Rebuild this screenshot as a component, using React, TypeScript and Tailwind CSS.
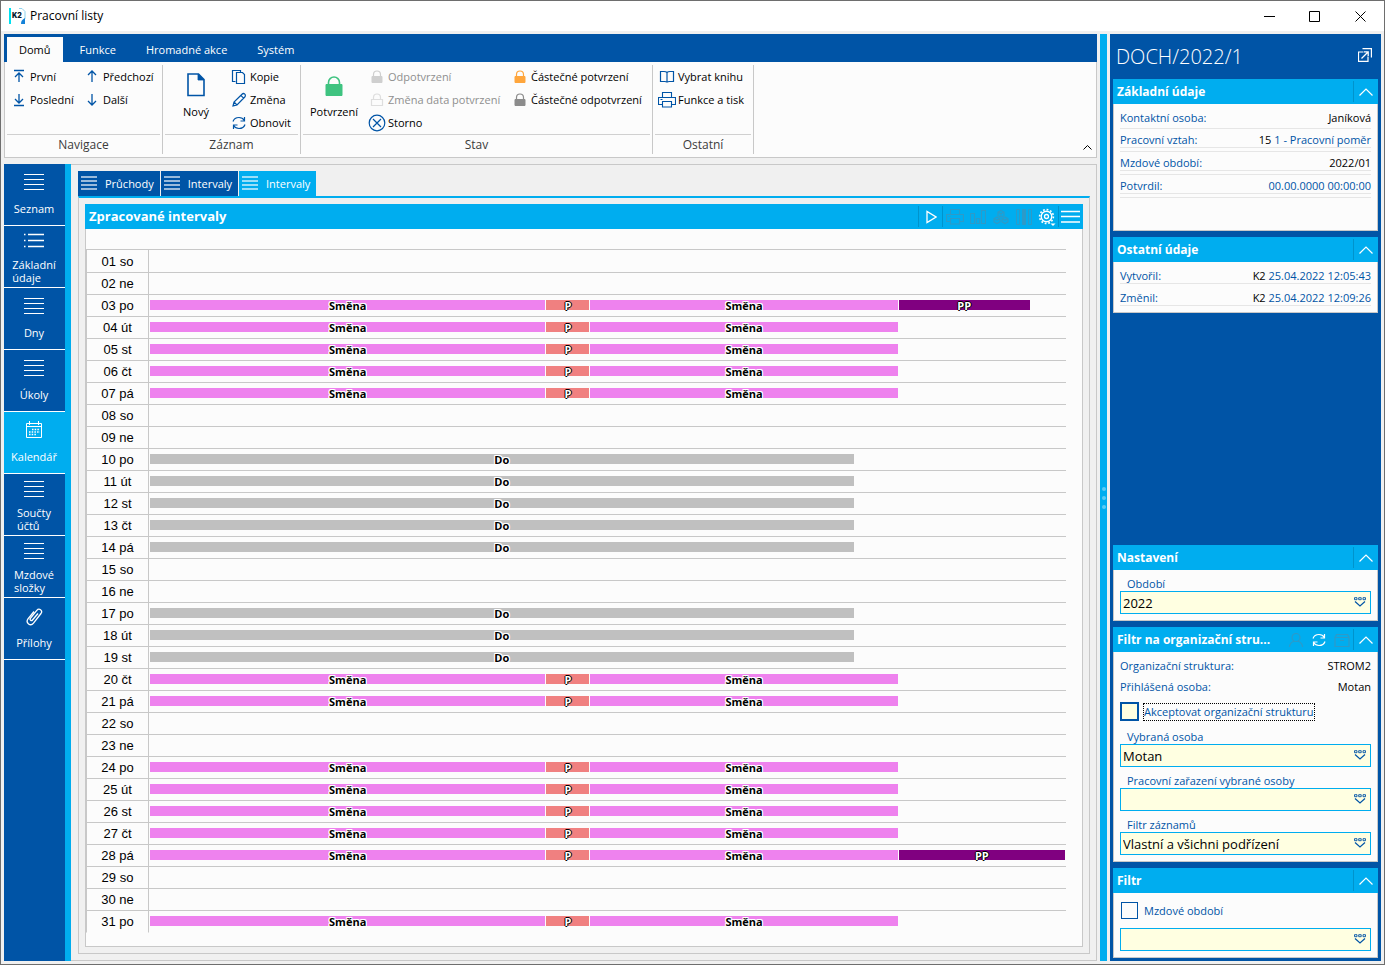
import React, { useState } from 'react';
import clsx from 'clsx';

type IconProps = { className?: string };
type Segment = { label: string; minutes: number; kind: 'shift' | 'break' | 'vacation' | 'overtime' };

// Visible part of the day in the timeline
const DAY_MINUTES = 624;

const WEEKDAYS = ['so', 'ne', 'po', 'út', 'st', 'čt', 'pá'];
const SHIFT_DAYS = [3, 4, 5, 6, 7, 20, 21, 24, 25, 26, 27, 28, 31];
const VACATION_DAYS = [10, 11, 12, 13, 14, 17, 18, 19];
const OVERTIME: Record<number, number> = { 3: 90, 28: 114 };

const getSegments = (day: number): Segment[] => {
  if (VACATION_DAYS.includes(day)) {
    return [{ label: 'Do', minutes: 480, kind: 'vacation' }];
  }
  if (!SHIFT_DAYS.includes(day)) return [];
  const segments: Segment[] = [
    { label: 'Směna', minutes: 270, kind: 'shift' },
    { label: 'P', minutes: 30, kind: 'break' },
    { label: 'Směna', minutes: 210, kind: 'shift' },
  ];
  if (OVERTIME[day]) {
    segments.push({ label: 'PP', minutes: OVERTIME[day], kind: 'overtime' });
  }
  return segments;
};

const days = Array.from({ length: 31 }, (_, i) => ({
  name: `${String(i + 1).padStart(2, '0')} ${WEEKDAYS[i % 7]}`,
  segments: getSegments(i + 1),
}));

const barColors = {
  shift: 'bg-[#ee82ee]',
  break: 'bg-[#f08080]',
  vacation: 'bg-[#c0c0c0]',
  overtime: 'bg-[#800080]',
};

const LIGHT_HALO = 'text-black [text-shadow:1px_0_#fff,-1px_0_#fff,0_1px_#fff,0_-1px_#fff,1px_1px_#fff,-1px_-1px_#fff,1px_-1px_#fff,-1px_1px_#fff]';
const DARK_HALO = 'text-white [text-shadow:1px_0_#000,-1px_0_#000,0_1px_#000,0_-1px_#000]';

/* ---------- icons ---------- */

const Svg = ({ w = 16, h = 16, className, children }: IconProps & { w?: number; h?: number; children: React.ReactNode }) => (
  <svg
    width={w}
    height={h}
    viewBox={`0 0 ${w} ${h}`}
    fill="none"
    stroke="currentColor"
    className={clsx('shrink-0', className)}
    aria-hidden="true"
  >
    {children}
  </svg>
);

const FirstIcon = () => <Svg><path d="M3 1.500h10M8 13V4M4 8l4-4 4 4" strokeWidth="1.3" /></Svg>;
const LastIcon = () => <Svg><path d="M3 13.5h10M8 2v9M4 7l4 4 4-4" strokeWidth="1.3" /></Svg>;
const UpIcon = () => <Svg><path d="M8 13V2M4 6l4-4 4 4" strokeWidth="1.3" /></Svg>;
const DownIcon = () => <Svg><path d="M8 2v11M4 9l4 4 4-4" strokeWidth="1.3" /></Svg>;
const NewIcon = () => (
  <Svg w={18} h={24}>
    <path d="M1 1h10.5L17 6.500V22.500H1z" strokeWidth="1.6" />
    <path d="M11 1v6h6z" fill="currentColor" strokeWidth="0.8" />
  </Svg>
);
const CopyIcon = () => (
  <Svg>
    <path d="M4.500 12.500h-3v-11h8v2" strokeWidth="1.200" />
    <path d="M5.500 3.500h6l2 2v9h-8z" strokeWidth="1.200" />
  </Svg>
);
const EditIcon = () => (
  <Svg>
    <path d="M2 14l1-4L11 2.200a1.800 1.800 0 0 1 2.800 2.800L6 13z M3 10l3 3M9.800 3.400l2.800 2.800M2 14l2-.6" strokeWidth="1.2" />
  </Svg>
);
const RefreshIcon = () => (
  <Svg>
    <path d="M2 6.500C3 3.500 5.200 2.500 8 2.500c2.500 0 4.300 1.200 5.400 3M13.500 2v4h-4M14 9.500c-1 3-3.200 4-6 4-2.500 0-4.300-1.200-5.400-3M2.500 14v-4h4" strokeWidth="1.2" />
  </Svg>
);
const LockIcon = ({ className }: IconProps) => (
  <Svg className={className}>
    <path d="M4.500 8V5.500a3.500 3.500 0 0 1 7 0V8" strokeWidth="1.2" />
    <path d="M3 7.500h10v6H3z" fill="currentColor" />
  </Svg>
);
const LockOutlineIcon = ({ className }: IconProps) => (
  <Svg className={className}>
    <path d="M4.500 8V5.500a3.500 3.500 0 0 1 7 0V8M2.500 7.500h11v6h-11z" strokeWidth="1.2" />
  </Svg>
);
const BigLockIcon = () => (
  <Svg w={18} h={22} className="text-[#3fc380]">
    <path d="M3.500 10V7.500a5.500 5.500 0 0 1 11 0V10" strokeWidth="1.6" />
    <path d="M1 9.500h16V20.500H1z" fill="currentColor" />
  </Svg>
);
const CancelIcon = () => (
  <Svg w={18} h={18}>
    <circle cx="9" cy="9" r="7.800" strokeWidth="1.2" />
    <path d="M5 5l8 8M13 5l-8 8" strokeWidth="1.2" />
  </Svg>
);
const BookIcon = () => (
  <Svg>
    <path d="M8 3.500C7 2.500 6 2.500 5 2.500H1.500v10H6c1 0 2 .5 2 1 0-.5 1-1 2-1h4.500v-10H11c-1 0-2 0-3 1zV13" strokeWidth="1.200" />
  </Svg>
);
const PrinterIcon = ({ className }: IconProps) => (
  <Svg w={18} h={16} className={className}>
    <path d="M4.500 5.500v-5h9v5M4.500 12.500h-4v-7h17v7h-4M4.500 9.500h9v5.500h-9zM2.500 7.500h2" strokeWidth="1.1" />
  </Svg>
);
const LinesIcon = () => (
  <Svg w={20} h={18}>
    <path d="M0 1.500h20M0 6.500h20M0 11.500h20M0 16.500h20" strokeWidth="1.2" />
  </Svg>
);
const BulletsIcon = () => (
  <Svg w={20} h={18}>
    <path d="M0 2.500h1.500M4 2.500h16M0 8.500h1.500M4 8.500h16M0 14.500h1.500M4 14.500h16" strokeWidth="1.300" />
  </Svg>
);
const CalendarIcon = () => (
  <Svg w={18} h={18}>
    <path d="M1.500 2.500h15v14h-15zM1.500 5.500h15M4.500 0v4M13.500 0v4" />
    <path d="M7 8.500h8M4 11h11M4 13.500h8" strokeDasharray="1.500 1.200" strokeWidth="1.400" />
  </Svg>
);
const ClipIcon = () => (
  <Svg w={18} h={20}>
    <path
      d="M13 6.500L7.500 13c-1.100 1.400-3.200-.2-2.100-1.700l6.400-8c2.300-2.800 6.300.2 4.200 3.200l-7.500 9.700c-3 3.700-8.300-.3-5.500-4.300L9 4.500"
      strokeWidth="1.300"
    />
  </Svg>
);
const TabLinesIcon = () => (
  <Svg w={16} h={15} className="opacity-60">
    <path d="M0 1h16M0 5h16M0 9h16M0 13h16" strokeWidth="2" />
  </Svg>
);
const PlayIcon = () => <Svg w={12} h={14}><path d="M2 1.500v11L11 7z" strokeWidth="1.3" /></Svg>;
const ChartIcon = () => <Svg><path d="M.5 4.500h4v10h-4zM6.500 9.500h3v5h-3zM11.500 1.500h4v13h-4z" strokeWidth="1.200" /></Svg>;
const CubesIcon = () => (
  <Svg>
    <path
      d="M8 1.500l3 1.600v3.600L8 8.200 5 6.700V3.100zM4 8l3 1.600v3.300l-3 1.600-3-1.600V9.600zM12 8l3 1.600v3.300l-3 1.600-3-1.600V9.600zM5 3.100l3 1.500 3-1.500M8 4.600v3.600M1 9.600l3 1.500 3-1.500M9 9.600l3 1.500 3-1.500"
      strokeWidth="1.200"
    />
  </Svg>
);
const ColumnsIcon = () => (
  <Svg>
    <path d="M.5.500h3v15h-3zM12.500.500h3v15h-3z" />
    <path d="M6.500.500h3v15h-3z" fill="currentColor" />
  </Svg>
);
const GearIcon = () => (
  <Svg w={18} h={18}>
    <circle cx="8.500" cy="8.500" r="5.300" strokeWidth="1.400" />
    <circle cx="8.500" cy="8.500" r="6.900" strokeWidth="1.600" strokeDasharray="1.800 1.800" />
    <circle cx="8.500" cy="8.500" r="2" strokeWidth="1.300" />
    <path d="M12.500 15.500h5L15 18z" fill="currentColor" stroke="none" />
  </Svg>
);
const MenuIcon = () => <Svg w={19} h={14}><path d="M0 1.500h19M0 6.500h19M0 12h19" strokeWidth="1.300" /></Svg>;
const ChevronIcon = () => <Svg w={14} h={8}><path d="M.5 7.500L7 1l6.500 6.500" strokeWidth="1.200" /></Svg>;
const PersonIcon = () => (
  <Svg>
    <circle cx="8" cy="5.500" r="4" strokeWidth="1.200" />
    <path d="M1.500 15c0-3 2-5 4.500-5.800M14.500 15c0-3-2-5-4.500-5.800" strokeWidth="1.200" />
  </Svg>
);
const ArchiveIcon = () => <Svg><path d="M2.500 2.500h11l1.500 3v9H1v-9zM1 5.500h14M6 8.500h4" strokeWidth="1.200" /></Svg>;
const PopoutIcon = () => (
  <Svg w={14} h={14}>
    <path d="M4.500.600h8.900V9.500M5.500 4h-5v9.400h9.500V8.500" strokeWidth="1.200" />
    <path d="M3.500 10.500l6.300-6.300M6 3.800h4.200V8" strokeWidth="1.300" />
  </Svg>
);
const LookupIcon = ({ className }: IconProps) => (
  <Svg w={12} h={10} className={className}>
    <path d="M.5.700h2.500v2H.5zM4.700.700h2.500v2H4.700zM9 .700h2.500v2H9z" strokeWidth="0.900" />
    <path d="M1 4.500L6 9l5-4.500" strokeWidth="1.200" />
  </Svg>
);
const AppLogo = () => (
  <svg width="17" height="17" viewBox="0 0 17 17" className="shrink-0" aria-hidden="true">
    <path d="M0 0h2v16H0z" fill="#00e0f0" />
    <path d="M10 .500h3l3 3V11" fill="none" stroke="#8fd3ee" />
    <path d="M16 10v6h-4c0-3 1-4.500 4-6z" fill="#1482d8" />
    <text x="3" y="10" fontSize="7" fontWeight="900" fontFamily="Inter, sans-serif" fill="#0a1b30">K2</text>
  </svg>
);

/* ---------- ribbon ---------- */

const RibbonButton = ({ icon, label, disabled }: { icon: React.ReactNode; label: string; disabled?: boolean }) => (
  <button
    type="button"
    disabled={disabled}
    className={clsx('flex h-[23px] items-center gap-[2px] whitespace-nowrap', disabled && 'text-[#8f8f8f]')}
  >
    <span className="flex w-[18px] shrink-0 justify-center text-[#0054a6]">{icon}</span>
    <span className="pt-px">{label}</span>
  </button>
);

const BigButton = ({ icon, label }: { icon: React.ReactNode; label: string }) => (
  <button type="button" className="flex h-[55px] w-[66px] flex-col items-center justify-end gap-[7px] whitespace-nowrap">
    <span className="text-[#0054a6]">{icon}</span>
    {label}
  </button>
);

const RibbonGroup = ({ title, className, children }: { title: string; className: string; children: React.ReactNode }) => (
  <section className={clsx('my-[3px] flex flex-col border-r border-[#c8c8c8]', className)}>
    <div className="flex h-[69px] shrink-0 items-start">{children}</div>
    <h2 className="mx-[2px] flex grow items-center justify-center border-t border-[#d0d0d0] pt-px text-xs text-[#3c3c3c]">{title}</h2>
  </section>
);

const Ribbon = () => {
  const [active, setActive] = useState('Domů');
  return (
    <header>
      <nav className="flex h-7 items-end bg-[#0054a6] pl-[3px]">
        {['Domů', 'Funkce', 'Hromadné akce', 'Systém'].map((tab) => (
          <button
            key={tab}
            type="button"
            onClick={() => setActive(tab)}
            className={clsx('h-[25px] pt-px', tab === active ? 'mr-[2px] bg-[#fcfcfc] px-3 text-black' : 'px-[15px] text-white')}
          >
            {tab}
          </button>
        ))}
      </nav>
      <div className="flex h-24 border border-t-0 border-[#c8c8c8] bg-[#fcfcfc]">
        <RibbonGroup title="Navigace" className="w-[158px]">
          <div className="w-[73px] pl-[5px]">
            <RibbonButton icon={<FirstIcon />} label="První" />
            <RibbonButton icon={<LastIcon />} label="Poslední" />
          </div>
          <div className="pl-[5px]">
            <RibbonButton icon={<UpIcon />} label="Předchozí" />
            <RibbonButton icon={<DownIcon />} label="Další" />
          </div>
        </RibbonGroup>
        <RibbonGroup title="Záznam" className="w-[138px]">
          <BigButton icon={<NewIcon />} label="Nový" />
          <div className="pl-px">
            <RibbonButton icon={<CopyIcon />} label="Kopie" />
            <RibbonButton icon={<EditIcon />} label="Změna" />
            <RibbonButton icon={<RefreshIcon />} label="Obnovit" />
          </div>
        </RibbonGroup>
        <RibbonGroup title="Stav" className="w-[352px]">
          <BigButton icon={<BigLockIcon />} label="Potvrzení" />
          <div className="w-[143px] pl-px">
            <RibbonButton icon={<LockIcon className="text-[#cfcfcf]" />} label="Odpotvrzení" disabled />
            <RibbonButton icon={<LockOutlineIcon className="text-[#dedede]" />} label="Změna data potvrzení" disabled />
            <RibbonButton icon={<CancelIcon />} label="Storno" />
          </div>
          <div className="pl-px">
            <RibbonButton icon={<LockIcon className="text-[#ffa63c]" />} label="Částečné potvrzení" />
            <RibbonButton icon={<LockIcon className="text-[#8c8c8c]" />} label="Částečné odpotvrzení" />
          </div>
        </RibbonGroup>
        <RibbonGroup title="Ostatní" className="w-[101px]">
          <div className="pl-[5px]">
            <RibbonButton icon={<BookIcon />} label="Vybrat knihu" />
            <RibbonButton icon={<PrinterIcon />} label="Funkce a tisk" />
          </div>
        </RibbonGroup>
        <button type="button" aria-label="Sbalit" className="mr-1 mb-[3px] ml-auto self-end text-black">
          <Svg w={9} h={10}><path d="M.5 5.500l4-4 4 4" /></Svg>
        </button>
      </div>
    </header>
  );
};

/* ---------- left navigation ---------- */

const sections = [
  { label: 'Seznam', icon: <LinesIcon /> },
  { label: 'Základní údaje', icon: <BulletsIcon />, wrapped: true },
  { label: 'Dny', icon: <LinesIcon /> },
  { label: 'Úkoly', icon: <LinesIcon /> },
  { label: 'Kalendář', icon: <CalendarIcon />, active: true },
  { label: 'Součty účtů', icon: <LinesIcon />, wrapped: true },
  { label: 'Mzdové složky', icon: <LinesIcon />, wrapped: true },
  { label: 'Přílohy', icon: <ClipIcon /> },
];

const SideNav = () => (
  <nav className="w-[67px] shrink-0 border-r-[6px] border-[#00adef] bg-[#0054a6] text-[11px] leading-[13px] text-white">
    {sections.map(({ label, icon, active, wrapped }) => (
      <button
        key={label}
        type="button"
        className={clsx(
          'flex h-[62px] w-full flex-col items-center border-b border-white pr-px',
          wrapped ? 'pt-[6px]' : 'pt-[9px] pb-[2px]',
          active && 'bg-[#00adef]',
        )}
      >
        <span className={clsx('flex items-start', wrapped ? 'h-[23px]' : 'h-5')}>{icon}</span>
        <span className="flex w-min grow items-center text-left">{label}</span>
      </button>
    ))}
  </nav>
);

/* ---------- timeline ---------- */

const toolButton = 'flex h-[21px] w-[23px] items-center justify-center';

const Timeline = () => (
  <section className="flex grow flex-col">
    <header className="flex h-[25px] items-center bg-[#00adef] text-white">
      <h2 className="grow pt-px pl-1 text-[13px] font-bold">Zpracované intervaly</h2>
      <button type="button" aria-label="Spustit" className="flex h-[21px] w-[25px] items-center justify-center border-x border-[#0093cc]"><PlayIcon /></button>
      <div className="flex text-[#2d9ac8]">
        <button type="button" disabled aria-label="Tisk" className={toolButton}><PrinterIcon /></button>
        <button type="button" disabled aria-label="Graf" className={toolButton}><ChartIcon /></button>
        <button type="button" disabled aria-label="Kostka" className={toolButton}><CubesIcon /></button>
        <button type="button" disabled aria-label="Sloupce" className={toolButton}><ColumnsIcon /></button>
      </div>
      <button type="button" aria-label="Nastavení" className={toolButton}><GearIcon /></button>
      <button type="button" aria-label="Nabídka" className="flex h-[21px] w-[25px] items-center justify-center border-l border-[#0093cc] pr-px"><MenuIcon /></button>
    </header>
    <div className="grow border border-t-0 border-[#c8c8c8] bg-[#fcfcfc] pt-5 pr-4 pb-[13px]">
      <table className="w-full table-fixed border-separate border-spacing-0">
        <colgroup>
          <col className="w-[63px]" />
          <col />
        </colgroup>
        <tbody className="[&>tr:first-child>*]:h-6 [&>tr:first-child>*]:border-t [&>tr:last-child>*]:border-b-transparent">
          {days.map(({ name, segments }) => (
            <tr key={name}>
              <th
                scope="row"
                className="h-[22px] border-r border-b border-l border-[#c8c8c8] p-0 text-center font-['Liberation_Sans',sans-serif] text-[13px] leading-[15px] font-normal"
              >
                {name}
              </th>
              <td className="h-[22px] border-b border-[#c8c8c8] p-0 pt-[5px] pl-px align-top">
                <div className="flex">
                  {segments.map(({ label, minutes, kind }, i) => (
                    <div key={i} className="pr-px" style={{ width: `${(minutes / DAY_MINUTES) * 100}%` }}>
                      <div className={clsx('flex h-[10px] items-center justify-center', barColors[kind])}>
                        <span
                          className={clsx(
                            'pt-px text-[11px] leading-[11px] font-bold',
                            kind === 'shift' || kind === 'vacation' ? LIGHT_HALO : DARK_HALO,
                          )}
                        >
                          {label}
                        </span>
                      </div>
                    </div>
                  ))}
                </div>
              </td>
            </tr>
          ))}
        </tbody>
      </table>
    </div>
  </section>
);

const Workspace = () => {
  const [tab, setTab] = useState(2);
  return (
    <div className="flex min-w-0 grow flex-col border border-l-0 border-[#c8c8c8] pt-[6px] pr-[6px] pb-[6px] pl-[7px]">
      <div className="flex gap-px text-[11px] text-white">
        {['Průchody', 'Intervaly', 'Intervaly'].map((label, i) => (
          <button
            key={i}
            type="button"
            onClick={() => setTab(i)}
            className={clsx('flex h-[25px] items-center gap-2 pr-[6px] pl-[3px]', tab === i ? 'bg-[#00adef]' : 'bg-[#0054a6]')}
          >
            <TabLinesIcon />
            <span className="pt-px">{label}</span>
          </button>
        ))}
      </div>
      <div className="flex grow flex-col border border-t-2 border-[#c8c8c8] border-t-[#00adef] p-[6px]">
        <Timeline />
      </div>
    </div>
  );
};

/* ---------- right panel ---------- */

const Card = ({ title, tools, className, children }: { title: string; tools?: React.ReactNode; className?: string; children: React.ReactNode }) => {
  const [open, setOpen] = useState(true);
  return (
    <section className={className}>
      <header className="flex h-[25px] items-center bg-[#00adef] text-white">
        <h2 className="grow pt-px pl-1 text-xs font-bold whitespace-nowrap">{title}</h2>
        {tools}
        <button
          type="button"
          aria-label={title}
          aria-expanded={open}
          onClick={() => setOpen(!open)}
          className="flex h-[21px] w-[25px] shrink-0 items-center justify-center border-l border-[#0093cc] pr-px"
        >
          <ChevronIcon />
        </button>
      </header>
      {open && <div className="border border-t-0 border-[#c8c8c8] bg-[#fcfcfc] px-[6px] pb-[6px] text-[#0054a6]">{children}</div>}
    </section>
  );
};

const Info = ({ label, value, note, className }: { label: string; value?: string; note?: string; className?: string }) => (
  <div className={clsx('flex items-end justify-between border-[#e6e6e6] leading-[14px] whitespace-nowrap', className)}>
    <dt>{label}</dt>
    <dd>
      <span className="text-black">{value}</span> {note}
    </dd>
  </div>
);

const Lookup = ({ label, hideLabel, value }: { label: string; hideLabel?: boolean; value?: string }) => (
  <label className="block">
    {!hideLabel && <span className="flex h-[21px] items-end pl-[7px] leading-[14px]">{label}</span>}
    <span className="relative block">
      <select
        defaultValue={value}
        aria-label={label}
        className="block h-[23px] w-full appearance-none border border-[#00adef] bg-[#ffffe1] pt-[2px] pr-6 pl-[2px] text-[13px] text-black outline-none"
      >
        <option>{value}</option>
      </select>
      <LookupIcon className="pointer-events-none absolute top-[6px] right-[5px] text-[#0054a6]" />
    </span>
  </label>
);

const SidePanel = () => (
  <aside className="flex w-[271px] shrink-0 flex-col gap-[6px] bg-[#0054a6] px-[3px] pb-[3px]">
    <div className="-mb-[6px] flex h-[45px] items-center justify-between pr-[6px] pl-[3px] text-white">
      <h1 className="text-[20px] font-light">DOCH/2022/1</h1>
      <button type="button" aria-label="Otevřít v okně" className="pb-1"><PopoutIcon /></button>
    </div>
    <Card title="Základní údaje">
      <dl className="h-[120px] pt-1">
        <Info label="Kontaktní osoba:" value="Janíková" className="h-[21px] border-b pb-[3px]" />
        {[
          { label: 'Pracovní vztah:', value: '15', note: '1 - Pracovní poměr' },
          { label: 'Mzdové období:', value: '2022/01' },
          { label: 'Potvrdil:', note: '00.00.0000 00:00:00' },
        ].map((row) => (
          <div key={row.label} className="h-[23px] border-b border-[#e6e6e6]">
            <Info {...row} className="h-[19px] border-b" />
          </div>
        ))}
      </dl>
    </Card>
    <Card title="Ostatní údaje">
      <dl>
        <Info label="Vytvořil:" value="K2" note="25.04.2022 12:05:43" className="h-[22px] border-b" />
        <Info label="Změnil:" value="K2" note="25.04.2022 12:09:26" className="h-[22px] border-b" />
      </dl>
    </Card>
    <Card title="Nastavení" className="mt-auto">
      <Lookup label="Období" value="2022" />
    </Card>
    <Card
      title="Filtr na organizační stru..."
      tools={
        <div className="flex shrink-0">
          <button type="button" disabled aria-label="Osoba" className={clsx(toolButton, 'text-[#2d9ac8]')}><PersonIcon /></button>
          <button type="button" aria-label="Obnovit" className={toolButton}><RefreshIcon /></button>
          <button type="button" disabled aria-label="Archiv" className={clsx(toolButton, 'text-[#2d9ac8]')}><ArchiveIcon /></button>
        </div>
      }
    >
      <dl>
        <Info label="Organizační struktura:" value="STROM2" className="h-[21px]" />
        <Info label="Přihlášená osoba:" value="Motan" className="h-[21px]" />
      </dl>
      <label className="mt-2 flex h-[19px] items-center gap-1">
        <input type="checkbox" className="size-[19px] shrink-0 appearance-none border-2 border-[#0054a6] bg-[#ffffe1] checked:bg-[#0054a6]" />
        <span className="border border-dotted border-black leading-4 whitespace-nowrap">Akceptovat organizační strukturu</span>
      </label>
      <div className="pt-[2px]">
        <Lookup label="Vybraná osoba" value="Motan" />
        <Lookup label="Pracovní zařazení vybrané osoby" />
        <Lookup label="Filtr záznamů" value="Vlastní a všichni podřízení" />
      </div>
    </Card>
    <Card title="Filtr">
      <label className="mb-[9px] flex items-center gap-[6px] pt-[9px] pl-px">
        <input type="checkbox" className="size-[17px] shrink-0 appearance-none border border-[#0054a6] bg-[#fcfcfc] checked:bg-[#0054a6]" />
        <span className="leading-4">Mzdové období</span>
      </label>
      <Lookup label="Mzdové období" hideLabel />
    </Card>
  </aside>
);

const TitleBar = () => (
  <div className="flex h-[30px] items-center bg-white pl-2 text-xs">
    <AppLogo />
    <span className="grow pl-1">Pracovní listy</span>
    <div className="flex">
      <button type="button" aria-label="Minimalizovat" className="flex w-[45px] justify-center"><Svg w={11} h={11}><path d="M0 5.500h11" /></Svg></button>
      <button type="button" aria-label="Maximalizovat" className="flex w-[45px] justify-center"><Svg w={11} h={11}><path d="M.5.500h10v10H.5z" /></Svg></button>
      <button type="button" aria-label="Zavřít" className="flex w-[47px] justify-center"><Svg w={11} h={11}><path d="M.5.500l10 10M10.500.500l-10 10" /></Svg></button>
    </div>
  </div>
);

const App = () => (
  <div className="flex min-h-screen flex-col border border-[#6e6e6e] bg-[#f0f0f0] font-['Open_Sans',sans-serif] text-[11px] text-black">
    <TitleBar />
    <div className="flex grow gap-[3px] p-[3px]">
      <main className="flex min-w-0 grow flex-col gap-[6px]">
        <Ribbon />
        <div className="flex grow">
          <SideNav />
          <Workspace />
        </div>
      </main>
      {/* splitter with its grip */}
      <div className="flex w-[7px] shrink-0 flex-col items-center justify-center gap-[5px] bg-[#00adef]">
        <span className="size-1 rounded-full bg-[#5ccbf5]" />
        <span className="size-1 rounded-full bg-[#5ccbf5]" />
        <span className="size-1 rounded-full bg-[#5ccbf5]" />
      </div>
      <SidePanel />
    </div>
  </div>
);

export default App;
